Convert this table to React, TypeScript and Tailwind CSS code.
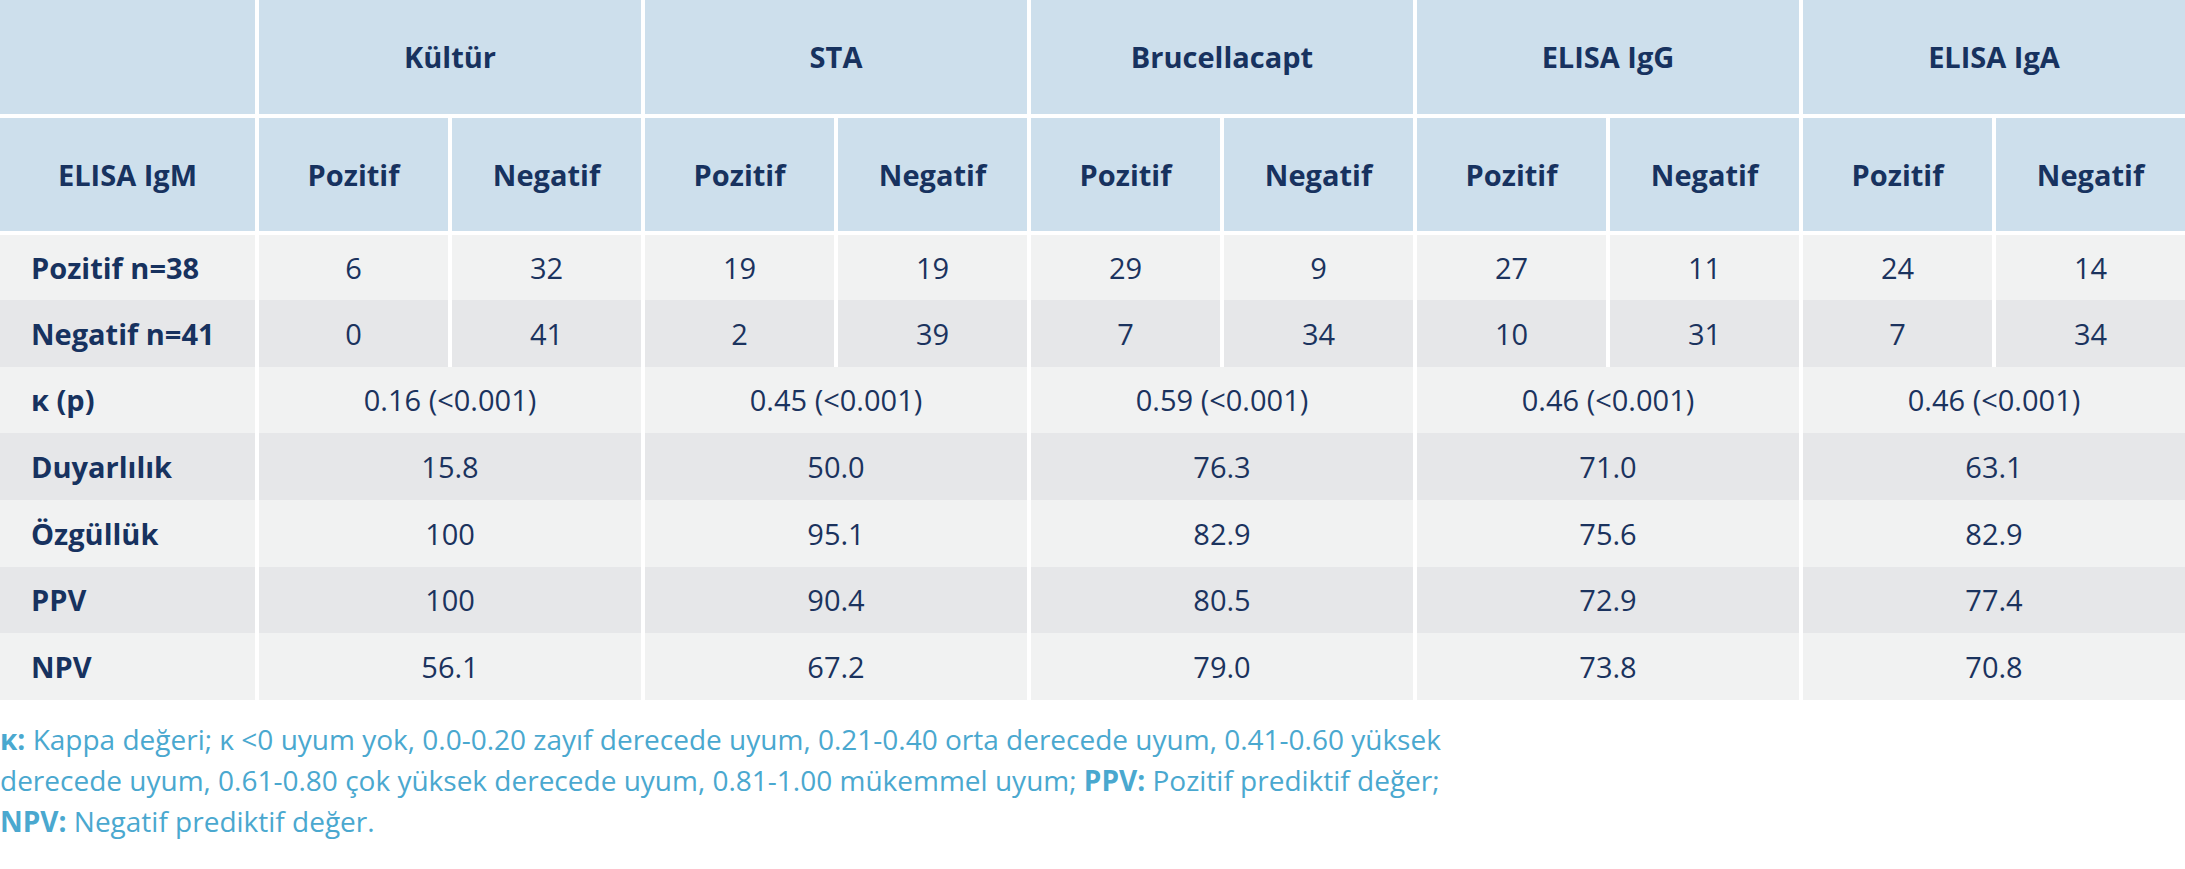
import React from "react";

const groups = ["Kültür", "STA", "Brucellacapt", "ELISA IgG", "ELISA IgA"];

const countRows: { label: string; vals: string[] }[] = [
  { label: "Pozitif n=38", vals: ["6", "32", "19", "19", "29", "9", "27", "11", "24", "14"] },
  { label: "Negatif n=41", vals: ["0", "41", "2", "39", "7", "34", "10", "31", "7", "34"] },
];

const metricRows: { label: string; vals: string[] }[] = [
  { label: "κ (p)", vals: ["0.16 (<0.001)", "0.45 (<0.001)", "0.59 (<0.001)", "0.46 (<0.001)", "0.46 (<0.001)"] },
  { label: "Duyarlılık", vals: ["15.8", "50.0", "76.3", "71.0", "63.1"] },
  { label: "Özgüllük", vals: ["100", "95.1", "82.9", "75.6", "82.9"] },
  { label: "PPV", vals: ["100", "90.4", "80.5", "72.9", "77.4"] },
  { label: "NPV", vals: ["56.1", "67.2", "79.0", "73.8", "70.8"] },
];

const cols = "grid grid-cols-[255px_repeat(10,189px)] gap-x-[4px]";

export default function App() {
  return (
    <div
      className="w-[2185px] h-[869px] bg-white overflow-hidden text-[#1b335e]"
      style={{ fontFamily: '"Open Sans", "Noto Sans", sans-serif' }}
    >
      {/* header */}
      <div className={`${cols} gap-y-[4px]`}>
        <div className="h-[114px] bg-[#cddfec]" />
        {groups.map((g) => (
          <div
            key={g}
            className="col-span-2 h-[114px] bg-[#cddfec] flex items-center justify-center font-bold text-[29px] text-[#17325f]"
          >
            {g}
          </div>
        ))}
        <div className="h-[113px] bg-[#cddfec] flex items-center justify-center font-bold text-[29px] text-[#17325f]">
          ELISA IgM
        </div>
        {groups.map((g) => (
          <React.Fragment key={g + "sub"}>
            <div className="h-[113px] bg-[#cddfec] flex items-center justify-center font-bold text-[29px] text-[#17325f]">
              Pozitif
            </div>
            <div className="h-[113px] bg-[#cddfec] flex items-center justify-center font-bold text-[29px] text-[#17325f]">
              Negatif
            </div>
          </React.Fragment>
        ))}
      </div>

      {/* body */}
      <div className={`${cols} mt-[4px] grid-rows-[65px_repeat(6,66.67px)]`}>
        {countRows.map((r, i) => {
          const bg = i % 2 === 0 ? "bg-[#f1f2f2]" : "bg-[#e6e7e9]";
          return (
            <React.Fragment key={r.label}>
              <div className={`${bg} flex items-center pl-[31px] font-bold text-[29px] text-[#17325f]`}>
                {r.label}
              </div>
              {r.vals.map((v, j) => (
                <div key={j} className={`${bg} flex items-center justify-center text-[29px]`}>
                  {v}
                </div>
              ))}
            </React.Fragment>
          );
        })}
        {metricRows.map((r, i) => {
          const bg = i % 2 === 0 ? "bg-[#f1f2f2]" : "bg-[#e6e7e9]";
          return (
            <React.Fragment key={r.label}>
              <div className={`${bg} flex items-center pl-[31px] font-bold text-[29px] text-[#17325f]`}>
                {r.label}
              </div>
              {r.vals.map((v, j) => (
                <div key={j} className={`${bg} col-span-2 flex items-center justify-center text-[29px]`}>
                  {v}
                </div>
              ))}
            </React.Fragment>
          );
        })}
      </div>

      {/* footnote */}
      <p className="mt-[19px] text-[28px] leading-[41px] text-[#4aa8cf] whitespace-nowrap">
        <b>κ:</b> Kappa değeri; κ &lt;0 uyum yok, 0.0-0.20 zayıf derecede uyum, 0.21-0.40 orta derecede uyum, 0.41-0.60 yüksek
        <br />
        derecede uyum, 0.61-0.80 çok yüksek derecede uyum, 0.81-1.00 mükemmel uyum; <b>PPV:</b> Pozitif prediktif değer;
        <br />
        <b>NPV:</b> Negatif prediktif değer.
      </p>
    </div>
  );
}
